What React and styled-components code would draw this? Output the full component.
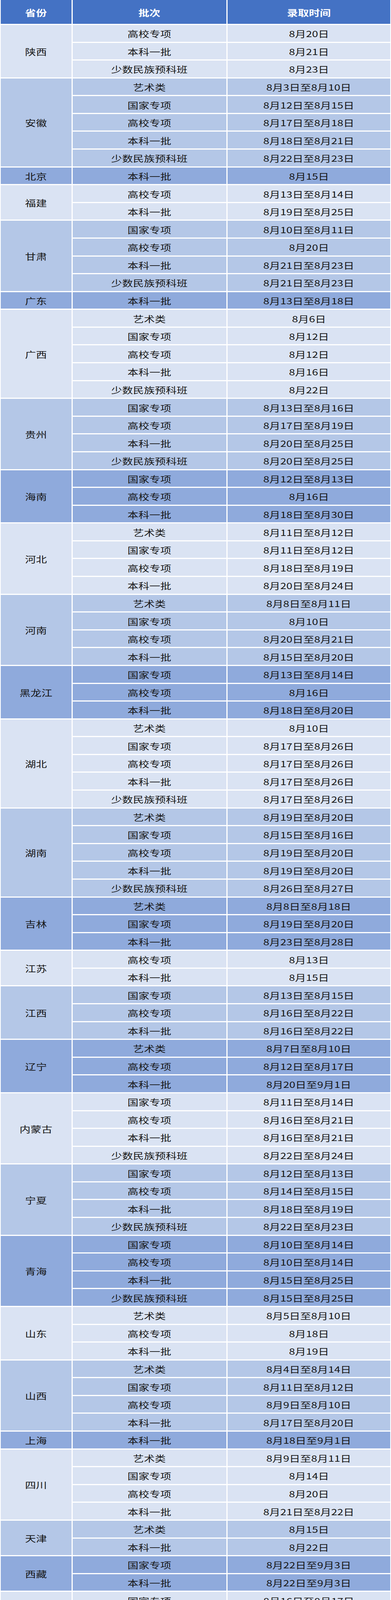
import React from 'react';
import styled, { createGlobalStyle } from 'styled-components';

const GlobalStyle = createGlobalStyle`
  html, body {
    margin: 0;
    padding: 0;
    background: #ffffff;
  }
  body {
    font-family: "Noto Sans CJK SC", "Noto Sans", sans-serif;
  }
`;

// three alternating group shades, cycling down the sheet
const tones = ['#DAE3F3', '#B4C7E7', '#8FAADC'];

const groups = [
  ['陕西', [['高校专项', '8月20日'], ['本科一批', '8月21日'], ['少数民族预科班', '8月23日']]],
  ['安徽', [['艺术类', '8月3日至8月10日'], ['国家专项', '8月12日至8月15日'], ['高校专项', '8月17日至8月18日'], ['本科一批', '8月18日至8月21日'], ['少数民族预科班', '8月22日至8月23日']]],
  ['北京', [['本科一批', '8月15日']]],
  ['福建', [['高校专项', '8月13日至8月14日'], ['本科一批', '8月19日至8月25日']]],
  ['甘肃', [['国家专项', '8月10日至8月11日'], ['高校专项', '8月20日'], ['本科一批', '8月21日至8月23日'], ['少数民族预科班', '8月21日至8月23日']]],
  ['广东', [['本科一批', '8月13日至8月18日']]],
  ['广西', [['艺术类', '8月6日'], ['国家专项', '8月12日'], ['高校专项', '8月12日'], ['本科一批', '8月16日'], ['少数民族预科班', '8月22日']]],
  ['贵州', [['国家专项', '8月13日至8月16日'], ['高校专项', '8月17日至8月19日'], ['本科一批', '8月20日至8月25日'], ['少数民族预科班', '8月20日至8月25日']]],
  ['海南', [['国家专项', '8月12日至8月13日'], ['高校专项', '8月16日'], ['本科一批', '8月18日至8月30日']]],
  ['河北', [['艺术类', '8月11日至8月12日'], ['国家专项', '8月11日至8月12日'], ['高校专项', '8月18日至8月19日'], ['本科一批', '8月20日至8月24日']]],
  ['河南', [['艺术类', '8月8日至8月11日'], ['国家专项', '8月10日'], ['高校专项', '8月20日至8月21日'], ['本科一批', '8月15日至8月20日']]],
  ['黑龙江', [['国家专项', '8月13日至8月14日'], ['高校专项', '8月16日'], ['本科一批', '8月18日至8月20日']]],
  ['湖北', [['艺术类', '8月10日'], ['国家专项', '8月17日至8月26日'], ['高校专项', '8月17日至8月26日'], ['本科一批', '8月17日至8月26日'], ['少数民族预科班', '8月17日至8月26日']]],
  ['湖南', [['艺术类', '8月19日至8月20日'], ['国家专项', '8月15日至8月16日'], ['高校专项', '8月19日至8月20日'], ['本科一批', '8月19日至8月20日'], ['少数民族预科班', '8月26日至8月27日']]],
  ['吉林', [['艺术类', '8月8日至8月18日'], ['国家专项', '8月19日至8月20日'], ['本科一批', '8月23日至8月28日']]],
  ['江苏', [['高校专项', '8月13日'], ['本科一批', '8月15日']]],
  ['江西', [['国家专项', '8月13日至8月15日'], ['高校专项', '8月16日至8月22日'], ['本科一批', '8月16日至8月22日']]],
  ['辽宁', [['艺术类', '8月7日至8月10日'], ['高校专项', '8月12日至8月17日'], ['本科一批', '8月20日至9月1日']]],
  ['内蒙古', [['国家专项', '8月11日至8月14日'], ['高校专项', '8月16日至8月21日'], ['本科一批', '8月16日至8月21日'], ['少数民族预科班', '8月22日至8月24日']]],
  ['宁夏', [['国家专项', '8月12日至8月13日'], ['高校专项', '8月14日至8月15日'], ['本科一批', '8月18日至8月19日'], ['少数民族预科班', '8月22日至8月23日']]],
  ['青海', [['国家专项', '8月10日至8月14日'], ['高校专项', '8月10日至8月14日'], ['本科一批', '8月15日至8月25日'], ['少数民族预科班', '8月15日至8月25日']]],
  ['山东', [['艺术类', '8月5日至8月10日'], ['高校专项', '8月18日'], ['本科一批', '8月19日']]],
  ['山西', [['艺术类', '8月4日至8月14日'], ['国家专项', '8月11日至8月12日'], ['高校专项', '8月9日至8月10日'], ['本科一批', '8月17日至8月20日']]],
  ['上海', [['本科一批', '8月18日至9月1日']]],
  ['四川', [['艺术类', '8月9日至8月11日'], ['国家专项', '8月14日'], ['高校专项', '8月20日'], ['本科一批', '8月21日至8月22日']]],
  ['天津', [['艺术类', '8月15日'], ['本科一批', '8月22日']]],
  ['西藏', [['国家专项', '8月22日至9月3日'], ['本科一批', '8月22日至9月3日']]],
  ['新疆', [['国家专项', '8月16日至8月17日'], ['高校专项', '8月23日至8月24日'], ['本科一批', '8月23日至8月24日'], ['少数民族预科班', '8月29日至8月30日']]],
  ['云南', [['国家专项', '8月14日至8月16日'], ['高校专项', '8月16日至8月18日'], ['本科一批', '8月19日至8月26日'], ['少数民族预科班', '8月27日至8月29日']]],
  ['浙江', [['艺术类', '8月12日至8月14日'], ['高校专项', '8月11日至8月14日'], ['本科一批', '8月19日至8月20日']]],
  ['重庆', [['国家专项', '8月14日至8月16日'], ['高校专项', '8月18日'], ['本科一批', '8月18日至8月19日'], ['少数民族预科班', '8月25日至8月26日']]],
];

const rowCount = groups.reduce((n, [, rows]) => n + rows.length, 0);

// the sheet fills the whole page height; body rows share what is left under the header
const Sheet = styled.div`
  display: grid;
  grid-template-columns: 181px 393px 1fr;
  grid-template-rows: 61px repeat(${p => p.$rows}, minmax(0, 1fr));
  gap: 3px;
  width: 1000px;
  height: 4758px;
  box-sizing: border-box;
  padding: 0 2px 2px;
  overflow: hidden;
  background: #ffffff;
`;

const HeadCell = styled.div`
  display: flex;
  align-items: center;
  justify-content: center;
  background: #4472c4;
  color: #ffffff;
  font-size: 22px;
  font-weight: 700;
`;

const Cell = styled.div`
  display: flex;
  align-items: center;
  justify-content: center;
  min-height: 0;
  grid-row: ${p => (p.$span ? `span ${p.$span}` : 'auto')};
  background: ${p => p.$tone};
  color: #161616;
  font-size: 22px;
`;

// the source sheet is stretched sideways, so the glyphs are too
const Label = styled.span`
  display: inline-block;
  white-space: nowrap;
  line-height: 1;
  transform: scaleX(1.27);
`;

export default function App() {
  return (
    <>
      <GlobalStyle />
      <Sheet $rows={rowCount}>
        <HeadCell><Label>省份</Label></HeadCell>
        <HeadCell><Label>批次</Label></HeadCell>
        <HeadCell><Label>录取时间</Label></HeadCell>
        {groups.map(([province, rows], i) => {
          const tone = tones[i % 3];
          return (
            <React.Fragment key={province}>
              <Cell $tone={tone} $span={rows.length}>
                <Label>{province}</Label>
              </Cell>
              {rows.map(([batch, date], j) => (
                <React.Fragment key={j}>
                  <Cell $tone={tone}><Label>{batch}</Label></Cell>
                  <Cell $tone={tone}><Label>{date}</Label></Cell>
                </React.Fragment>
              ))}
            </React.Fragment>
          );
        })}
      </Sheet>
    </>
  );
}
